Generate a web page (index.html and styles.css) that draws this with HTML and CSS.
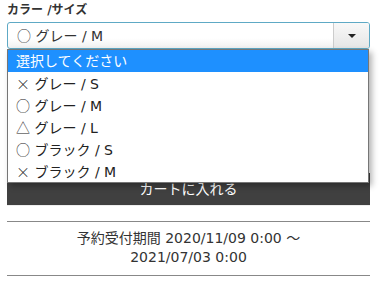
FILE: index.html
```html
<!DOCTYPE html>
<html lang="ja">
<head>
    <meta charset="UTF-8">
    <meta name="viewport" content="width=device-width, initial-scale=1.0">
    <title>カラー /サイズ</title>
    <link rel="stylesheet" href="styles.css">
</head>
<body>
    <div class="container">
        <p class="fieldLabel">カラー /サイズ</p>
        <div class="selectWrap">
            <div class="selectBox">
                <span class="selectValue"><span class="mark">○</span> グレー / M</span>
                <span class="selectArrow"><i></i></span>
            </div>
            <ul class="optionList">
                <li class="active">選択してください</li>
                <li><span class="mark">×</span> グレー / S</li>
                <li><span class="mark">○</span> グレー / M</li>
                <li><span class="mark">△</span> グレー / L</li>
                <li><span class="mark">○</span> ブラック / S</li>
                <li><span class="mark">×</span> ブラック / M</li>
            </ul>
        </div>
        <a href="javascript:;" class="cartBtn">カートに入れる</a>
        <div class="period">
            予約受付期間 2020/11/09 0:00 ～<br>2021/07/03 0:00
        </div>
    </div>
</body>
</html>
```

FILE: styles.css
```css
*{
    margin: 0;
    padding: 0;
}
body{
    font-family: "DejaVu Sans", "Noto Sans CJK JP", sans-serif;
    color: #333;
    background: #fff;
}
li{
    list-style: none;
}
.container{
    width: 363px;
    margin-left: 7px;
}
.fieldLabel{
    font-size: 12px;
    font-weight: bold;
    line-height: 16px;
    padding-top: 2px;
    height: 18px;
}
.mark{
    font-family: "Noto Sans CJK JP", sans-serif;
    font-weight: 300;
}
.selectWrap{
    position: relative;
    margin-top: 2px;
}
.selectBox{
    display: flex;
    height: 25px;
    border: 1px solid #5ea9c5;
    border-radius: 3px;
    background: linear-gradient(#fff 60%, #f1f1f1);
    overflow: hidden;
}
.selectValue{
    flex: 1;
    font-size: 14px;
    line-height: 25px;
    padding-left: 9px;
    color: #333;
}
.selectArrow{
    width: 35px;
    border-left: 1px solid #ccc;
    background: linear-gradient(#f8f8f8, #e6e6e6);
    display: flex;
    align-items: center;
    justify-content: center;
}
.selectArrow i{
    width: 0;
    height: 0;
    border-left: 4px solid transparent;
    border-right: 4px solid transparent;
    border-top: 4px solid #222;
}
.optionList{
    position: absolute;
    left: 0;
    top: 27px;
    width: 360px;
    border: 1px solid #767676;
    background: #fff;
    box-shadow: 3px 3px 6px rgba(0, 0, 0, .3);
    z-index: 2;
}
.optionList li{
    height: 22px;
    line-height: 22px;
    font-size: 14px;
    padding-left: 8px;
    color: #222;
}
.optionList li.active{
    background-color: #1e90ff;
    color: #fff;
}
.cartBtn{
    display: block;
    margin-top: 124px;
    height: 32px;
    line-height: 32px;
    text-align: center;
    font-size: 14px;
    color: #fff;
    text-decoration: none;
    background-color: #404040;
    border-bottom: 1px solid #eee;
}
.period{
    margin-top: 15px;
    border-top: 1px solid #888;
    border-bottom: 1px solid #888;
    padding: 7px 0 8px;
    text-align: center;
    font-size: 14px;
    line-height: 19px;
    color: #333;
}
```
